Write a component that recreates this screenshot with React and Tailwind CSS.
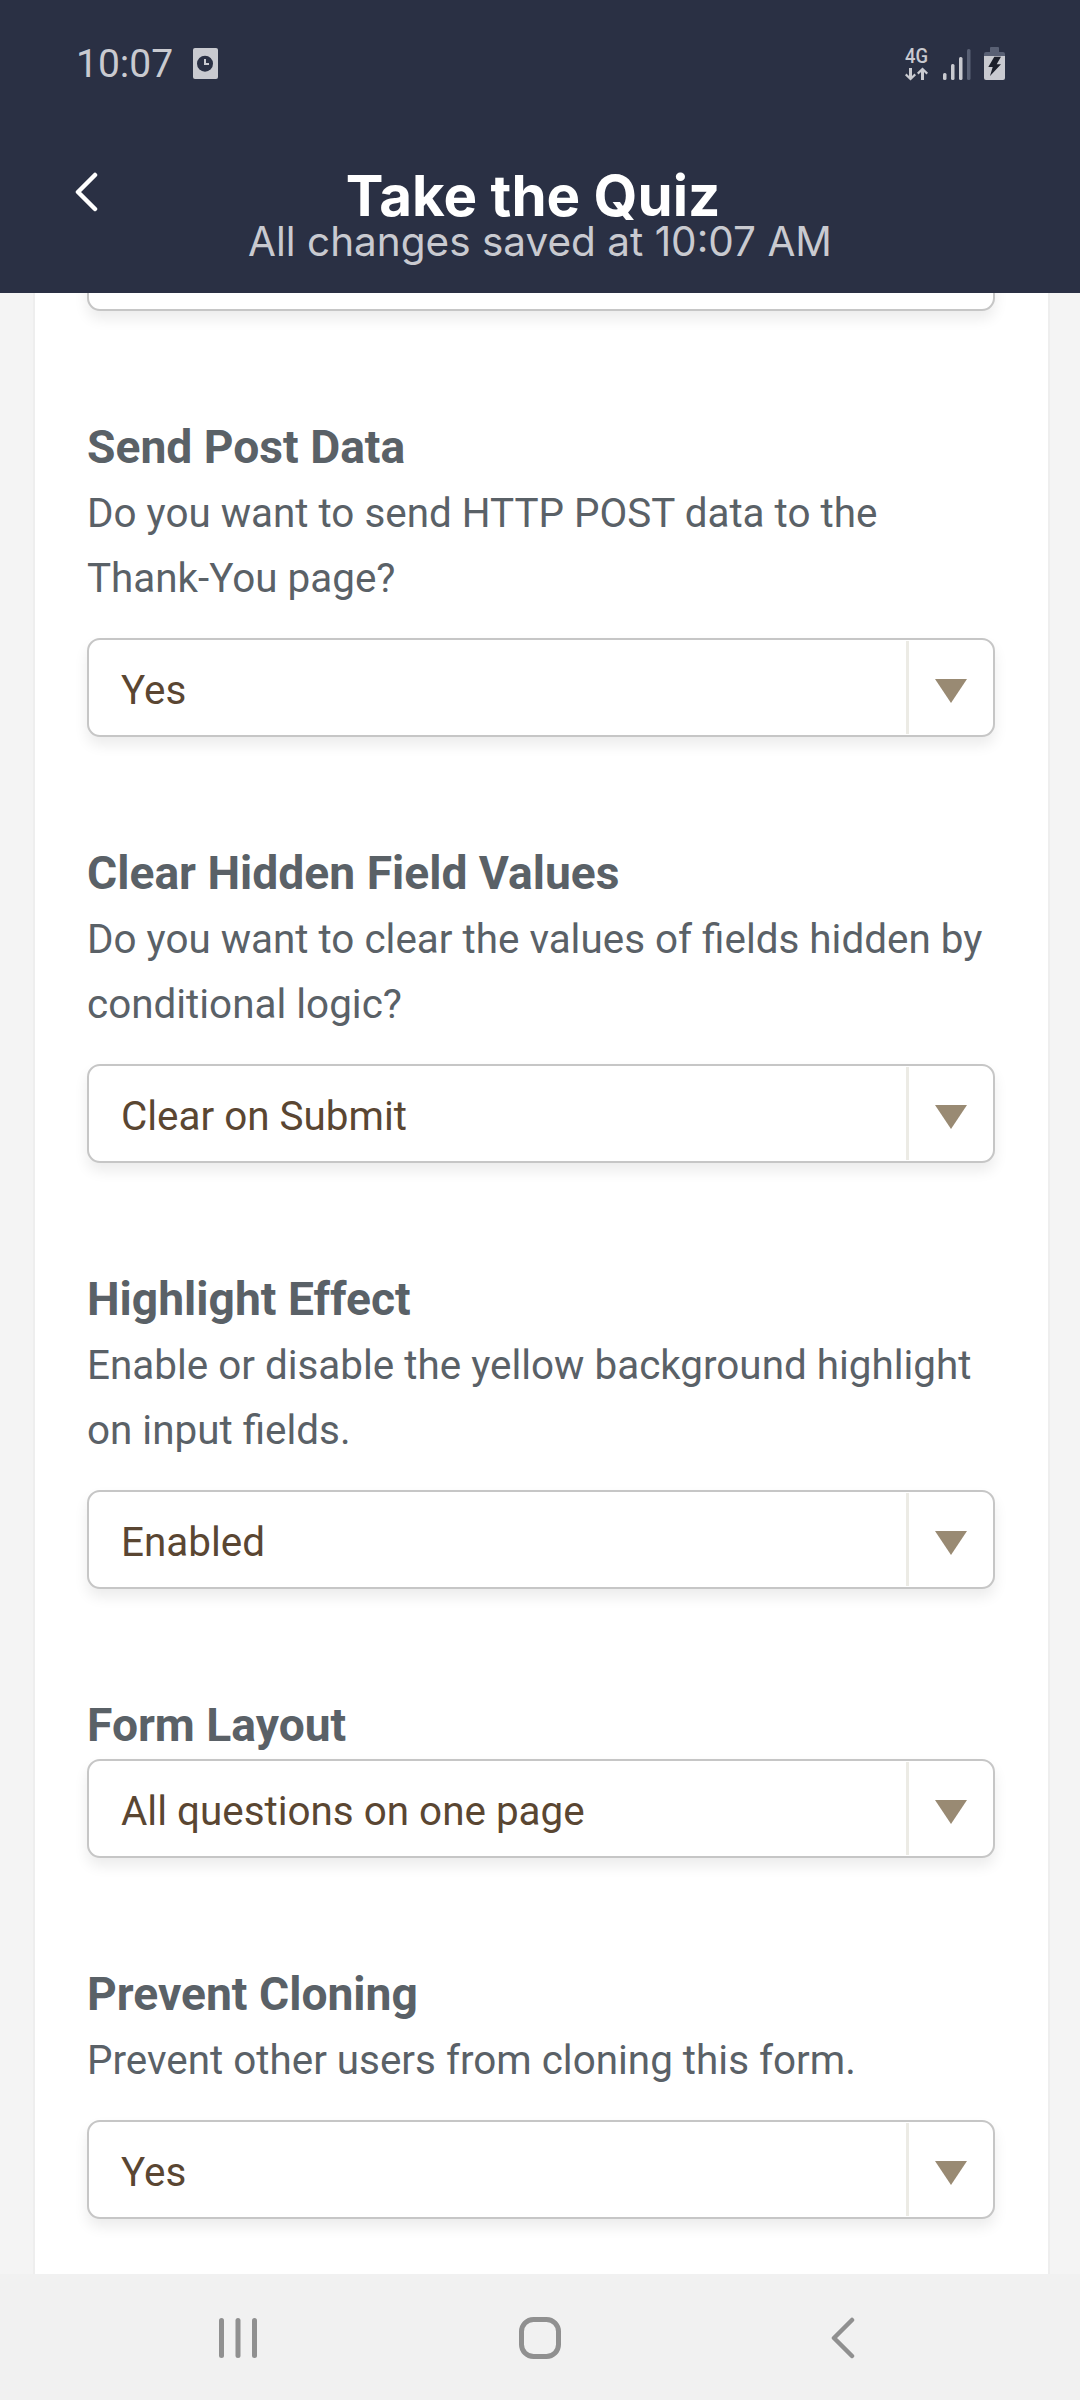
const roboto = "font-['Roboto',sans-serif]";
const boxStyle = 'h-[99px] rounded-[13px] border-2 border-[#c6c6c6] bg-white shadow-[0_8px_14px_rgba(0,0,0,0.08)]';

const groups = [
  {
    title: 'Send Post Data',
    desc: ['Do you want to send HTTP POST data to the', 'Thank-You page?'],
    value: 'Yes',
  },
  {
    title: 'Clear Hidden Field Values',
    desc: ['Do you want to clear the values of fields hidden by', 'conditional logic?'],
    value: 'Clear on Submit',
  },
  {
    title: 'Highlight Effect',
    desc: ['Enable or disable the yellow background highlight', 'on input fields.'],
    value: 'Enabled',
  },
  {
    title: 'Form Layout',
    desc: [],
    value: 'All questions on one page',
  },
  {
    title: 'Prevent Cloning',
    desc: ['Prevent other users from cloning this form.'],
    value: 'Yes',
  },
];

const SelectBox = ({ value }) => (
  <div className={`${boxStyle} flex items-stretch`}>
    <div className="flex flex-1 items-center pl-[32px] pt-[7px] text-[40.4px] text-[#5a4632]">{value}</div>
    <div className="my-[1px] w-[3px] bg-[#ecebe5]" />
    <div className="flex w-[84px] items-center justify-center pt-[7px]">
      <svg width="32" height="24" viewBox="0 0 32 24">
        <path d="M0 0H32L16 24Z" fill="#998a73" />
      </svg>
    </div>
  </div>
);

const StatusBar = () => (
  <div className="flex h-[127px] items-center justify-between pl-[76px] pr-[75px]">
    <div className="flex items-center gap-[20px]">
      <span className={`${roboto} mt-[2px] text-[39px] leading-none text-[#c9cad0]`}>10:07</span>
      <svg width="25" height="31" viewBox="0 0 25 31">
        <rect width="25" height="31" rx="2" fill="#c9cad0" />
        <circle cx="12" cy="15.700" r="8" fill="#2a3044" />
        <path d="M12 11v5h4" stroke="#c9cad0" strokeWidth="2" fill="none" />
      </svg>
    </div>
    <svg width="100" height="46" viewBox="0 -6 100 46">
      <text x="0" y="16" fontSize="20.500" fontWeight="500" fontFamily="Roboto, sans-serif" fill="#c9cad0" textLength="23" lengthAdjust="spacingAndGlyphs">4G</text>
      <g fill="#c9cad0">
        <path d="M4 21h3v8l2.500-2.500 1.500 1.700-5.500 5.300L0 28.200l1.500-1.700L4 29z" />
        <path d="M16 33h3v-8l2.500 2.500 1.500-1.700L17.500 20.500 12 25.800l1.500 1.700L16 25z" />
        <rect x="38" y="26" width="3.500" height="7" rx="1.500" />
        <rect x="46" y="17" width="3.500" height="16" rx="1.500" />
        <rect x="54" y="10" width="3.500" height="23" rx="1.500" />
        <rect x="62" y="2" width="3.500" height="31" rx="1.500" fill="#596074" />
        <rect x="85" y="0" width="9" height="7" rx="1" fill="#596074" />
        <path d="M79 7a2 2 0 0 1 2-2h17a2 2 0 0 1 2 2v2H79z" fill="#596074" />
        <path d="M79 9h21v22a2 2 0 0 1-2 2H81a2 2 0 0 1-2-2z" />
      </g>
      <path d="M89.300 9.700H96L91.700 17.300H96L85 29L87.700 20H83.300z" fill="#1c1f2a" />
    </svg>
  </div>
);

const App = () => {
  return (
    <div className={`${roboto} flex h-[2400px] w-[1080px] flex-col overflow-hidden bg-[#f4f4f4]`}>
      <header className="relative z-10 h-[293px] shrink-0 bg-[#2a3044]">
        <StatusBar />
        <div className="flex pl-[74px] pt-[43px]">
          <svg className="mt-[2px] shrink-0" width="24" height="40" viewBox="0 0 24 40" fill="none">
            <path d="M21 3L4 20l17 17" stroke="#fff" strokeWidth="4.500" strokeLinecap="round" strokeLinejoin="round" />
          </svg>
          <div className="flex flex-1 flex-col items-center pr-[98px]">
            <h1 className="mr-[14px] font-['Inter',sans-serif] text-[56.500px] leading-[52px] font-bold text-white">Take the Quiz</h1>
            <p className="font-['Inter',sans-serif] text-[40.500px] leading-[40px] text-[#c9cad0]">All changes saved at 10:07 AM</p>
          </div>
        </div>
      </header>

      <main className="flex-1 overflow-hidden">
        <div className="ml-[33px] mr-[30px] h-full flow-root border-x-2 border-[#eeeeee] bg-white pl-[52px] pr-[53px]">
          <div className="-mt-[81px] flex flex-col gap-[104px]">
            <div className={boxStyle} />
            {groups.map((g) => (
              <section key={g.title}>
                <h2 className="mb-[2px] text-[46.200px] leading-[64px] font-bold text-[#5a6167]">{g.title}</h2>
                {g.desc.length > 0 && (
                  <p className="mb-[27px] text-[40.400px] leading-[65px] text-[#5a6167]">
                    {g.desc.map((line) => (
                      <span key={line} className="block whitespace-nowrap">{line}</span>
                    ))}
                  </p>
                )}
                <div className={g.desc.length > 0 ? '' : 'mt-[2px]'}>
                  <SelectBox value={g.value} />
                </div>
              </section>
            ))}
          </div>
        </div>
      </main>

      <nav className="flex h-[126px] shrink-0 items-center bg-[#f1f1f1] pl-[219px] pt-[2px]">
        <svg className="mr-[262px]" width="38" height="40" viewBox="0 0 38 40" fill="#909090">
          <rect x="0" y="0" width="5" height="40" rx="2.500" />
          <rect x="16.500" y="0" width="5" height="40" rx="2.500" />
          <rect x="33" y="0" width="5" height="40" rx="2.500" />
        </svg>
        <svg className="mr-[270px]" width="42" height="42" viewBox="0 0 42 42" fill="none">
          <rect x="2.500" y="2.500" width="37" height="37" rx="12" stroke="#909090" strokeWidth="5" />
        </svg>
        <svg width="24" height="42" viewBox="0 0 24 42" fill="none">
          <path d="M21 3L3 21l18 18" stroke="#909090" strokeWidth="4.500" strokeLinecap="round" strokeLinejoin="round" />
        </svg>
      </nav>
    </div>
  );
};

export default App;
